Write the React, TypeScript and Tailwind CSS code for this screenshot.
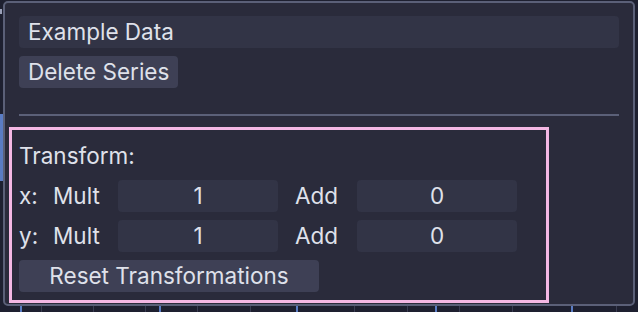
import React from 'react';

const font = { fontFamily: 'Inter, "Noto Sans", sans-serif' };

const blueTicks = [20, 159, 296, 435, 571];
const grayTicks = [41, 93, 145, 197, 250, 354, 407, 459, 512, 616];

function Field({ value }: { value: string }) {
  return (
    <div className="h-[32px] w-[160px] rounded-[4px] bg-[#323446] flex items-center justify-center">
      {value}
    </div>
  );
}

function AxisRow({ axis }: { axis: string }) {
  return (
    <div className="flex items-center h-[32px]">
      <span className="w-[34px]">{axis}:</span>
      <span className="w-[65px]">Mult</span>
      <Field value="1" />
      <span className="w-[79px] pl-[17px]">Add</span>
      <Field value="0" />
    </div>
  );
}

export default function App() {
  return (
    <div
      className="w-[638px] h-[312px] bg-[#1e2030] overflow-hidden text-[22.5px] leading-none text-[#dfe1ea] flex flex-col"
      style={font}
    >
      <div className="flex pt-[1px]">
        {/* plot edge peeking out on the left */}
        <svg width="3" height="305" className="shrink-0">
          <rect x="0" y="113" width="3" height="67" fill="#5a7cc4" />
          <rect x="0" y="8" width="2" height="5" fill="#9aa0b8" />
        </svg>
        <div className="w-[632px] h-[305px] rounded-[5px] border-2 border-[#5b6078] bg-[#2a2b3b] px-[14px] pt-[13px]">
          {/* series name */}
          <div className="h-[32px] w-full rounded-[4px] bg-[#323446] flex items-center pl-[9px]">
            Example Data
          </div>
          <button className="mt-[8px] h-[32px] px-[9px] rounded-[4px] bg-[#3e4055] flex items-center">
            Delete Series
          </button>
          <div className="mt-[26px] h-[2px] w-full bg-[#5b6078]" />

          {/* transform panel */}
          <div className="mt-[11px] -ml-[10px] w-[540px] h-[176px] border-[3px] border-[#f4b8e4] pl-[7px] pt-[10px] flex flex-col gap-[8px]">
            <div className="h-[32px] flex items-center">Transform:</div>
            <AxisRow axis="x" />
            <AxisRow axis="y" />
            <button className="h-[32px] w-[300px] rounded-[4px] bg-[#3e4055] flex items-center justify-center">
              Reset Transformations
            </button>
          </div>
        </div>
      </div>
      {/* plot grid below the popup */}
      <svg width="638" height="6" className="shrink-0">
        {grayTicks.map((x) => (
          <rect key={x} x={x} y="0" width="1" height="6" fill="#3a3d52" />
        ))}
        {blueTicks.map((x) => (
          <rect key={x} x={x} y="0" width="2" height="6" fill="#5a7cc4" />
        ))}
      </svg>
    </div>
  );
}
